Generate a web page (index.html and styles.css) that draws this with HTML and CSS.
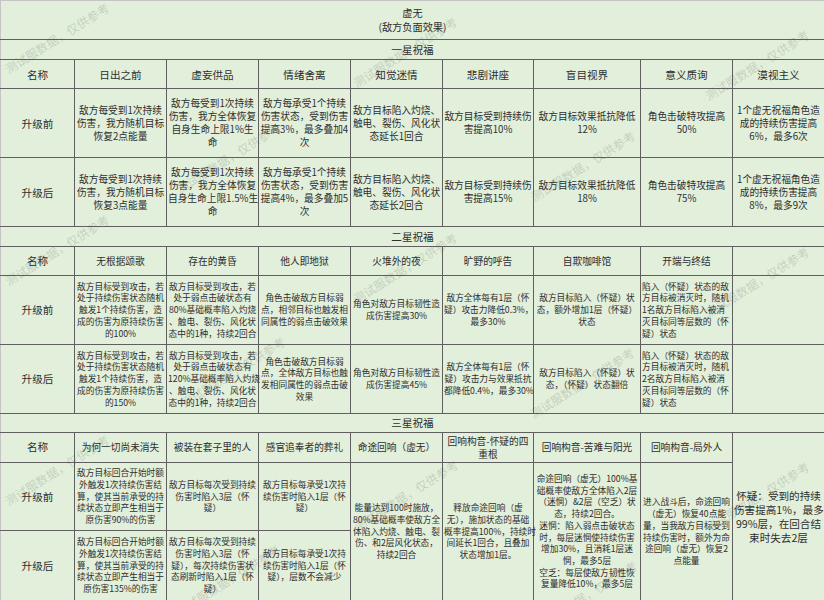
FILE: index.html
```html
<!DOCTYPE html>
<html lang="zh-CN">
<head>
<meta charset="utf-8">
<title>虚无</title>
<link rel="stylesheet" href="styles.css">
</head>
<body>
<div class="sheet">
<table class="grid">
<colgroup>
<col class="c-label"><col class="c-n"><col class="c-n"><col class="c-n"><col class="c-n"><col class="c-n2"><col class="c-wide"><col class="c-n"><col class="c-n">
</colgroup>
<tr class="r-title"><td colspan="9" class="title">虚无<br>(敌方负面效果)</td></tr>

<tr class="r-sec1"><td colspan="9" class="sec">一星祝福</td></tr>
<tr class="r-hdr1 h1">
<td class="lbl">名称</td><td>日出之前</td><td>虚妄供品</td><td>情绪舍离</td><td>知觉迷情</td><td>悲剧讲座</td><td>盲目视界</td><td>意义质询</td><td>漠视主义</td>
</tr>
<tr class="r-d1a d1">
<td class="lbl">升级前</td>
<td>敌方每受到1次持续<br>伤害，我方随机目标<br>恢复2点能量</td>
<td>敌方每受到1次持续<br>伤害，我方全体恢复<br>自身生命上限1%生<br>命</td>
<td>敌方每承受1个持续<br>伤害状态，受到伤害<br>提高3%，最多叠加4<br>次</td>
<td>敌方目标陷入灼烧、<br>触电、裂伤、风化状<br>态延长1回合</td>
<td>敌方目标受到持续伤<br>害提高10%</td>
<td>敌方目标效果抵抗降低<br>12%</td>
<td>角色击破特攻提高<br>50%</td>
<td>1个虚无祝福角色造<br>成的持续伤害提高<br>6%，最多6次</td>
</tr>
<tr class="r-d1b d1">
<td class="lbl">升级后</td>
<td>敌方每受到1次持续<br>伤害，我方随机目标<br>恢复3点能量</td>
<td>敌方每受到1次持续<br>伤害，我方全体恢复<br>自身生命上限1.5%生<br>命</td>
<td>敌方每承受1个持续<br>伤害状态，受到伤害<br>提高4%，最多叠加5<br>次</td>
<td>敌方目标陷入灼烧、<br>触电、裂伤、风化状<br>态延长2回合</td>
<td>敌方目标受到持续伤<br>害提高15%</td>
<td>敌方目标效果抵抗降低<br>18%</td>
<td>角色击破特攻提高<br>75%</td>
<td>1个虚无祝福角色造<br>成的持续伤害提高<br>8%，最多9次</td>
</tr>

<tr class="r-sec2"><td colspan="9" class="sec">二星祝福</td></tr>
<tr class="r-hdr2 h2">
<td class="lbl">名称</td><td>无根据颂歌</td><td>存在的黄昏</td><td>他人即地狱</td><td>火堆外的夜</td><td>旷野的呼告</td><td>自欺咖啡馆</td><td>开端与终结</td><td></td>
</tr>
<tr class="r-d2a d2">
<td class="lbl">升级前</td>
<td>敌方目标受到攻击，若<br>处于持续伤害状态随机<br>触发1个持续伤害，造<br>成的伤害为原持续伤害<br>的100%</td>
<td>敌方目标受到攻击，若<br>处于弱点击破状态有<br>80%基础概率陷入灼烧<br>、触电、裂伤、风化状<br>态中的1种，持续2回合</td>
<td>角色击破敌方目标弱<br>点，相邻目标也触发相<br>同属性的弱点击破效果</td>
<td>角色对敌方目标韧性造<br>成伤害提高30%</td>
<td>敌方全体每有1层（怀<br>疑）攻击力降低0.3%，<br>最多30%</td>
<td>敌方目标陷入（怀疑）状<br>态，额外增加1层（怀疑）<br>状态</td>
<td class="left">陷入（怀疑）状态的敌<br>方目标被消灭时，随机<br>1名敌方目标陷入被消<br>灭目标同等层数的（怀<br>疑）状态</td>
<td></td>
</tr>
<tr class="r-d2b d2">
<td class="lbl">升级后</td>
<td>敌方目标受到攻击，若<br>处于持续伤害状态随机<br>触发1个持续伤害，造<br>成的伤害为原持续伤害<br>的150%</td>
<td>敌方目标受到攻击，若<br>处于弱点击破状态有<br>120%基础概率陷入灼烧<br>、触电、裂伤、风化状<br>态中的1种，持续2回合</td>
<td>角色击破敌方目标弱<br>点，全体敌方目标也触<br>发相同属性的弱点击破<br>效果</td>
<td>角色对敌方目标韧性造<br>成伤害提高45%</td>
<td>敌方全体每有1层（怀<br>疑）攻击力与效果抵抗<br>都降低0.4%，最多30%</td>
<td>敌方目标陷入（怀疑）状<br>态，（怀疑）状态翻倍</td>
<td class="left">陷入（怀疑）状态的敌<br>方目标被消灭时，随机<br>2名敌方目标陷入被消<br>灭目标同等层数的（怀<br>疑）状态</td>
<td></td>
</tr>

<tr class="r-sec3"><td colspan="9" class="sec">三星祝福</td></tr>
<tr class="r-hdr3 h2">
<td class="lbl">名称</td><td>为何一切尚未消失</td><td>被装在套子里的人</td><td>感官追奉者的葬礼</td><td>命途回响（虚无）</td><td>回响构音-怀疑的四<br>重根</td><td>回响构音-苦难与阳光</td><td>回响构音-局外人</td>
<td rowspan="3" class="big">怀疑：受到的持续<br>伤害提高1%，最多<br>99%层，在回合结<br>束时失去2层</td>
</tr>
<tr class="r-d3a d2">
<td class="lbl">升级前</td>
<td>敌方目标回合开始时额<br>外触发1次持续伤害结<br>算，使其当前承受的持<br>续状态立即产生相当于<br>原伤害90%的伤害</td>
<td>敌方目标每次受到持续<br>伤害时陷入3层（怀<br>疑）</td>
<td>敌方目标每承受1次持<br>续伤害时陷入1层（怀<br>疑）</td>
<td rowspan="2">能量达到100时施放，<br>80%基础概率使敌方全<br>体陷入灼烧、触电、裂<br>伤、和2层风化状态，<br>持续2回合</td>
<td rowspan="2">释放命途回响（虚<br>无），施加状态的基础<br>概率提高100%，持续时<br>间延长1回合，且叠加<br>状态增加1层。</td>
<td rowspan="2">命途回响（虚无）100%基<br>础概率使敌方全体陷入2层<br>（迷惘）&amp;2层（空乏）状<br>态，持续2回合。<br>迷惘：陷入弱点击破状态<br>时，每层迷惘使持续伤害<br>增加30%，且消耗1层迷<br>惘，最多5层<br>空乏：每层使敌方韧性恢<br>复量降低10%，最多5层</td>
<td rowspan="2">进入战斗后，命途回响<br>（虚无）恢复40点能<br>量，当我敌方目标受到<br>持续伤害时，额外为命<br>途回响（虚无）恢复2<br>点能量</td>
</tr>
<tr class="r-d3b d2">
<td class="lbl">升级后</td>
<td>敌方目标回合开始时额<br>外触发1次持续伤害结<br>算，使其当前承受的持<br>续状态立即产生相当于<br>原伤害135%的伤害</td>
<td>敌方目标每次受到持续<br>伤害时陷入3层（怀<br>疑），每次持续伤害状<br>态刷新时陷入1层（怀<br>疑）</td>
<td>敌方目标每承受1次持<br>续伤害时陷入1层（怀<br>疑），层数不会减少</td>
</tr>
</table>

<div class="marks">
<span class="wm">测试服数据，仅供参考</span>
<span class="wm">测试服数据，仅供参考</span>
<span class="wm">测试服数据，仅供参考</span>
<span class="wm">测试服数据，仅供参考</span>
<span class="wm">测试服数据，仅供参考</span>
<span class="wm">测试服数据，仅供参考</span>
<span class="wm">测试服数据，仅供参考</span>
<span class="wm">测试服数据，仅供参考</span>
<span class="wm">测试服数据，仅供参考</span>
<span class="wm">测试服数据，仅供参考</span>
<span class="wm">测试服数据，仅供参考</span>
<span class="wm">测试服数据，仅供参考</span>
<span class="wm">测试服数据，仅供参考</span>
<span class="wm">测试服数据，仅供参考</span>
<span class="wm">测试服数据，仅供参考</span>
</div>
</div>
</body>
</html>
```

FILE: styles.css
```css
html, body {
  margin: 0;
  padding: 0;
  background: #e2efda;
}

body {
  font-family: "Noto Sans CJK SC", "Noto Sans", sans-serif;
  color: #2e2e2e;
}

.sheet {
  position: relative;
  width: 824px;
  height: 600px;
  overflow: hidden;
  background: #e2efda;
}

.grid {
  border-collapse: collapse;
  table-layout: fixed;
  width: 824px;
}

.c-label { width: 74px; }
.c-n { width: 92px; }
.c-n2 { width: 91px; }
.c-wide { width: 107px; }

.grid td {
  border: 1px solid #5f5f5f;
  padding: 0 1px;
  text-align: center;
  vertical-align: middle;
  white-space: nowrap;
  font-size: 9.7px;
  line-height: 13px;
}

.grid tr:first-child td {
  border-top-color: #c4c4c4;
}

.grid td:first-child {
  border-left-color: #c4c4c4;
}

.grid td.title {
  font-size: 10.2px;
  line-height: 14px;
}

.grid td.sec {
  font-size: 10.6px;
  line-height: 14px;
}

.grid td.lbl {
  font-size: 10.6px;
}

.h1 td { font-size: 10.6px; }
.h2 td { font-size: 9.7px; line-height: 12.5px; }

.d1 td { font-size: 9.7px; line-height: 13px; }
.d2 td { font-size: 8.7px; line-height: 11.7px; }

.grid td.left { text-align: left; }

.grid td.big {
  font-size: 10.6px;
  line-height: 14px;
}

.r-title { height: 39px; }
.r-sec1 { height: 20px; }
.r-hdr1 { height: 29px; }
.r-d1a { height: 69px; }
.r-d1b { height: 69px; }
.r-sec2 { height: 20px; }
.r-hdr2 { height: 29px; }
.r-d2a { height: 69px; }
.r-d2b { height: 69px; }
.r-sec3 { height: 19px; }
.r-hdr3 { height: 30px; }
.r-d3a { height: 68px; }
.r-d3b { height: 70px; }

.marks {
  position: absolute;
  inset: 0;
  pointer-events: none;
}

.wm {
  position: absolute;
  font-size: 12px;
  line-height: 14px;
  white-space: nowrap;
  color: rgba(70, 70, 70, 0.2);
  transform: translate(-50%, -50%) rotate(-32deg);
}

.wm:nth-child(1)  { left: 57px;  top: 38px; }
.wm:nth-child(2)  { left: 405px; top: 52px; }
.wm:nth-child(3)  { left: 757px; top: 65px; }
.wm:nth-child(4)  { left: 228px; top: 158px; }
.wm:nth-child(5)  { left: 583px; top: 166px; }
.wm:nth-child(6)  { left: 57px;  top: 250px; }
.wm:nth-child(7)  { left: 405px; top: 268px; }
.wm:nth-child(8)  { left: 757px; top: 282px; }
.wm:nth-child(9)  { left: 233px; top: 372px; }
.wm:nth-child(10) { left: 582px; top: 383px; }
.wm:nth-child(11) { left: 57px;  top: 470px; }
.wm:nth-child(12) { left: 406px; top: 495px; }
.wm:nth-child(13) { left: 757px; top: 497px; }
.wm:nth-child(14) { left: 228px; top: 580px; }
.wm:nth-child(15) { left: 585px; top: 596px; }
```
